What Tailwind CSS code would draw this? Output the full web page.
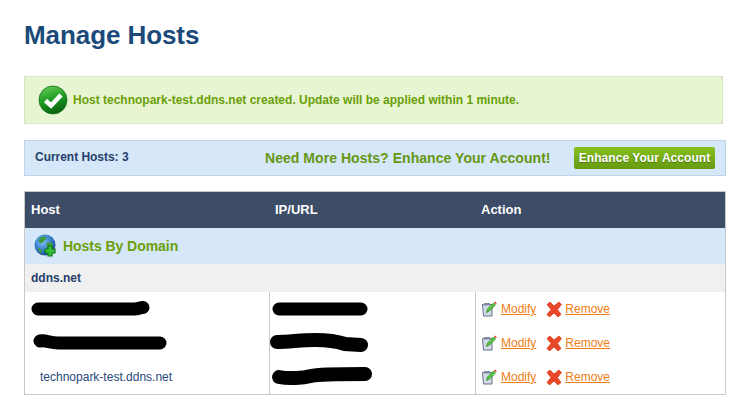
<!DOCTYPE html>
<html lang="en">
<head>
    <meta charset="UTF-8">
    <title>Manage Hosts</title>
    <script src="https://cdn.jsdelivr.net/npm/@tailwindcss/browser@4"></script>
</head>
<body class="bg-white font-['Liberation_Sans',Arial,sans-serif] h-[401px] overflow-hidden">
    <div class="pl-6 pr-[11px] pt-[19px]">
        <h1 class="text-[26px] leading-[32px] font-bold text-[#1b4a7a] tracking-[-0.08px]">Manage Hosts</h1>

        <!-- success message -->
        <div class="mt-[25px] mr-[3px] h-[48px] flex items-center gap-[5px] pl-[13px] bg-[#e8f5d2] border border-[#d5e5bd]">
            <svg width="30" height="30" viewBox="0 0 30 30" class="shrink-0">
                <defs>
                    <linearGradient id="okGrad" x1="0" y1="0" x2="0.3" y2="1">
                        <stop offset="0" stop-color="#6fd05c"/>
                        <stop offset="0.55" stop-color="#1f9e24"/>
                        <stop offset="1" stop-color="#0b6611"/>
                    </linearGradient>
                </defs>
                <circle cx="15" cy="15" r="14" fill="url(#okGrad)" stroke="#14741a" stroke-width="0.8"/>
                <path d="M7.500 15.500l5.500 5L23 10" fill="none" stroke="#fff" stroke-width="4.600"/>
            </svg>
            <span class="text-[12px] font-bold text-[#689f08]">Host technopark-test.ddns.net created. Update will be applied within 1 minute.</span>
        </div>

        <!-- current hosts bar -->
        <div class="mt-4 h-[36px] flex items-center bg-[#d5e7f8] border border-[#bdd3e8] pl-[10px] pr-[10px]">
            <span class="w-[230px] text-[12px] font-bold text-[#27406b] -mt-[2px] tracking-[-0.03px]">Current Hosts: 3</span>
            <span class="text-[14px] font-bold text-[#669612] tracking-[0.05px]">Need More Hosts? Enhance Your Account!</span>
            <a class="ml-auto h-[22px] w-[141px] flex items-center justify-center rounded-[2px] bg-gradient-to-b from-[#86c11e] to-[#679a12] text-[12px] font-bold text-white tracking-[0.05px] [text-shadow:0_1px_1px_#4c7308]">Enhance Your Account</a>
        </div>

        <!-- hosts table -->
        <div class="mt-[15px] border border-[#c8c8c8] text-[12px]">
            <div class="grid grid-cols-[245px_206px_1fr] h-[36px] items-center bg-[#3d4d68] text-white font-bold text-[13px]">
                <div class="pl-[6px]">Host</div>
                <div class="pl-[5px]">IP/URL</div>
                <div class="pl-[5px]">Action</div>
            </div>
            <div class="h-[36px] flex items-center gap-[5px] pl-[9px] bg-[#d5e7f8]">
                <svg width="24" height="24" viewBox="0 0 24 24" class="shrink-0">
                    <defs>
                        <radialGradient id="globeGrad" cx="0.4" cy="0.35" r="0.7">
                            <stop offset="0" stop-color="#7cc0f5"/>
                            <stop offset="0.7" stop-color="#2a6fc0"/>
                            <stop offset="1" stop-color="#1a3f80"/>
                        </radialGradient>
                    </defs>
                    <circle cx="11" cy="11" r="10.500" fill="url(#globeGrad)"/>
                    <path d="M5 5c2-2 5-3 7-2 1 2-1 3-2 4s-3 3-4 2-2-2-1-4zM13 9c2-1 5-1 6 1 0 3-1 6-3 7-2 0-3-2-3-4s-1-3 0-4zM4 14c2 0 3 1 4 3 0 1 0 2-1 2-2-1-3-3-3-5z" fill="#3f9a3a"/>
                    <path d="M14 12h4v3h3v4h-3v3h-4v-3h-3v-4h3z" fill="#37c537" stroke="#11751a" stroke-width="1.200"/>
                </svg>
                <span class="text-[14px] font-bold text-[#6c9f08] tracking-[-0.05px]">Hosts By Domain</span>
            </div>
            <div class="h-[28px] flex items-center pl-[6px] bg-[#f0f0f0] font-bold text-[#27406b]">ddns.net</div>

            <div class="grid grid-cols-[245px_206px_1fr] h-[34px]">
                <div class="border-r border-[#c8c8c8] flex items-center">
                    <svg width="244" height="34" viewBox="0 0 244 34"><path d="M13 17H110c3 0 5-1.500 8-1.500" fill="none" stroke="#000" stroke-width="13" stroke-linecap="round"/></svg>
                </div>
                <div class="border-r border-[#c8c8c8] flex items-center">
                    <svg width="205" height="34" viewBox="0 0 205 34"><path d="M9 17H91" fill="none" stroke="#000" stroke-width="13" stroke-linecap="round"/></svg>
                </div>
                <div class="flex items-center pl-[5px]">
                    <svg width="16" height="16" viewBox="0 0 16 16" class="shrink-0"><path d="M1.500 3.500h9.500v11.500H2.500z" fill="#d3dae8" stroke="#66708a"/><path d="M3 2h6v2.500H3z" fill="#7f8aa0"/><path d="M5.500 11.500l1-3.500 6-6 2 2-6 6z" fill="#55c83c" stroke="#2a8a22" stroke-width="0.700"/><path d="M13 1.500l1-1 1.800 1.800-1 1z" fill="#e03a2a"/></svg>
                    <a class="ml-[4px] text-[#f07c14] underline">Modify</a>
                    <svg width="16" height="16" viewBox="0 0 16 16" class="ml-[10px] shrink-0"><path d="M1 3.500l3-2.500 4 4 5-4 2.500 2.500-4 5 3.500 5-3 2.500-4-4-4.500 4L1 13.500l4-5z" fill="#e8482a" stroke="#e0401f" stroke-width="0.800"/></svg>
                    <a class="ml-[3px] text-[#f07c14] underline">Remove</a>
                </div>
            </div>
            <div class="grid grid-cols-[245px_206px_1fr] h-[34px]">
                <div class="border-r border-[#c8c8c8] flex items-center">
                    <svg width="244" height="34" viewBox="0 0 244 34"><path d="M15 15c6-1 10 2 18 2H135" fill="none" stroke="#000" stroke-width="13" stroke-linecap="round"/></svg>
                </div>
                <div class="border-r border-[#c8c8c8] flex items-center">
                    <svg width="205" height="34" viewBox="0 0 205 34"><path d="M7 16c12 0 24-2 38-2 14 0 24 2 30 4l16 1" fill="none" stroke="#000" stroke-width="14" stroke-linecap="round"/></svg>
                </div>
                <div class="flex items-center pl-[5px]">
                    <svg width="16" height="16" viewBox="0 0 16 16" class="shrink-0"><path d="M1.500 3.500h9.500v11.500H2.500z" fill="#d3dae8" stroke="#66708a"/><path d="M3 2h6v2.500H3z" fill="#7f8aa0"/><path d="M5.500 11.500l1-3.500 6-6 2 2-6 6z" fill="#55c83c" stroke="#2a8a22" stroke-width="0.700"/><path d="M13 1.500l1-1 1.800 1.800-1 1z" fill="#e03a2a"/></svg>
                    <a class="ml-[4px] text-[#f07c14] underline">Modify</a>
                    <svg width="16" height="16" viewBox="0 0 16 16" class="ml-[10px] shrink-0"><path d="M1 3.500l3-2.500 4 4 5-4 2.500 2.500-4 5 3.500 5-3 2.500-4-4-4.500 4L1 13.500l4-5z" fill="#e8482a" stroke="#e0401f" stroke-width="0.800"/></svg>
                    <a class="ml-[3px] text-[#f07c14] underline">Remove</a>
                </div>
            </div>
            <div class="grid grid-cols-[245px_206px_1fr] h-[34px]">
                <div class="border-r border-[#c8c8c8] flex items-center pl-[15px] text-[#27487b]">technopark-test.ddns.net</div>
                <div class="border-r border-[#c8c8c8] flex items-center">
                    <svg width="205" height="34" viewBox="0 0 205 34"><path d="M9 17c10 2 24 1 32-1 8-2 30-2 54-2" fill="none" stroke="#000" stroke-width="14" stroke-linecap="round"/></svg>
                </div>
                <div class="flex items-center pl-[5px]">
                    <svg width="16" height="16" viewBox="0 0 16 16" class="shrink-0"><path d="M1.500 3.500h9.500v11.500H2.500z" fill="#d3dae8" stroke="#66708a"/><path d="M3 2h6v2.500H3z" fill="#7f8aa0"/><path d="M5.500 11.500l1-3.500 6-6 2 2-6 6z" fill="#55c83c" stroke="#2a8a22" stroke-width="0.700"/><path d="M13 1.500l1-1 1.800 1.800-1 1z" fill="#e03a2a"/></svg>
                    <a class="ml-[4px] text-[#f07c14] underline">Modify</a>
                    <svg width="16" height="16" viewBox="0 0 16 16" class="ml-[10px] shrink-0"><path d="M1 3.500l3-2.500 4 4 5-4 2.500 2.500-4 5 3.500 5-3 2.500-4-4-4.500 4L1 13.500l4-5z" fill="#e8482a" stroke="#e0401f" stroke-width="0.800"/></svg>
                    <a class="ml-[3px] text-[#f07c14] underline">Remove</a>
                </div>
            </div>
        </div>
    </div>
</body>
</html>
